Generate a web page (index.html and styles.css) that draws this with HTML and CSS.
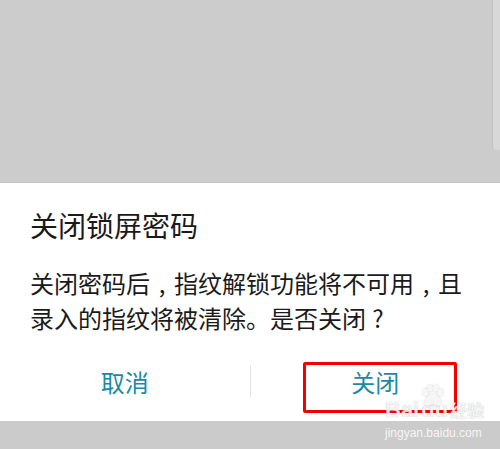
FILE: index.html
```html
<!DOCTYPE html>
<html lang="zh-CN">
<head>
    <meta charset="UTF-8">
    <title>关闭锁屏密码</title>
    <link rel="stylesheet" href="styles.css">
</head>
<body>
    <!-- Dimmed screen behind the dialog -->
    <div class="backdrop">
        <div class="side-panel"></div>
    </div>

    <!-- Dialog -->
    <div class="dialog">
        <h1 class="title">关闭锁屏密码</h1>
        <p class="message">关闭密码后<span class="punct">,</span>指纹解锁功能将不可用<span class="punct">,</span>且<br>录入的指纹将被清除。是否关闭<span class="punct">?</span></p>
        <div class="actions">
            <div class="btn">取消</div>
            <div class="divider"></div>
            <div class="btn">关闭</div>
        </div>
        <div class="highlight"></div>
    </div>

    <div class="bottom-bar"></div>

    <!-- Watermark -->
    <div class="watermark">
        <div class="wm-logo">
            <span>Bai</span>
            <span class="wm-du">du
                <svg class="paw" width="24" height="22" viewBox="0 0 26 24">
                    <ellipse cx="6" cy="8" rx="3" ry="4"/>
                    <ellipse cx="11" cy="3.5" rx="3" ry="3.5"/>
                    <ellipse cx="17" cy="3.5" rx="3" ry="3.5"/>
                    <ellipse cx="22" cy="8" rx="3" ry="4"/>
                    <path d="M14 10c-5 0-9 6-9 10 0 3 3 3 5 2 2-1 6-1 8 0 2 1 5 1 5-2 0-4-4-10-9-10z"/>
                </svg>
            </span>
            <span class="wm-cn">经验</span>
        </div>
        <div class="wm-url">jingyan.baidu.com</div>
    </div>
</body>
</html>
```

FILE: styles.css
```css
* {
    margin: 0;
    padding: 0;
    box-sizing: border-box;
}

body {
    width: 500px;
    height: 449px;
    overflow: hidden;
    position: relative;
    background-color: #cccccc;
    font-family: "Noto Sans CJK SC", "Noto Sans", sans-serif;
}

/* Dimmed area above the dialog */
.backdrop {
    height: 183px;
    display: flex;
    justify-content: flex-end;
    border-bottom: 1px solid #c4c4c4;
}

.side-panel {
    width: 8px;
    height: 150px;
    background-color: #d8d8d8;
    border-left: 1px solid #c2c2c2;
    border-bottom-left-radius: 3px;
}

/* Dialog box */
.dialog {
    position: relative;
    height: 238px;
    background-color: #fff;
    padding: 27px 0 0 0;
    color: #1a1a1a;
}

.title {
    padding-left: 30px;
    font-size: 28px;
    font-weight: normal;
    line-height: 30px;
}

.message {
    margin-top: 25px;
    padding-left: 30px;
    font-size: 24px;
    line-height: 35px;
}

/* centred full-width punctuation */
.punct {
    display: inline-block;
    width: 24px;
    text-align: center;
}

.actions {
    display: flex;
    align-items: center;
    height: 48px;
    margin-top: 23px;
}

.btn {
    flex: 1;
    text-align: center;
    font-size: 24px;
    color: #1a8aa6;
    line-height: 30px;
}

.divider {
    width: 1px;
    height: 32px;
    background-color: #e2e2e2;
}

/* Red annotation box */
.highlight {
    position: absolute;
    left: 303px;
    top: 179px;
    width: 154px;
    height: 51px;
    border: 3px solid #f40000;
    border-radius: 2px;
}

.bottom-bar {
    height: 28px;
    background-color: #cbcbcb;
}

/* Baidu watermark */
.watermark {
    position: absolute;
    left: 385px;
    top: 400px;
    color: rgba(255, 255, 255, 0.85);
    text-shadow: 0 0 1px rgba(0, 0, 0, 0.3);
    font-family: "Liberation Sans", Arial, sans-serif;
}

.wm-logo {
    display: flex;
    align-items: flex-end;
    font-size: 22px;
    font-weight: bold;
    line-height: 20px;
}

.wm-du {
    position: relative;
    margin-left: 2px;
}

.paw {
    position: absolute;
    left: -1px;
    top: -15px;
    fill: rgba(255, 255, 255, 0.8);
    filter: drop-shadow(0 0 1px rgba(0, 0, 0, 0.25));
}

.wm-cn {
    font-family: "Noto Sans CJK SC", sans-serif;
    font-size: 17px;
    margin-left: 2px;
}

.wm-url {
    font-size: 12px;
    line-height: 14px;
    margin-top: 6px;
    text-shadow: none;
}
```
